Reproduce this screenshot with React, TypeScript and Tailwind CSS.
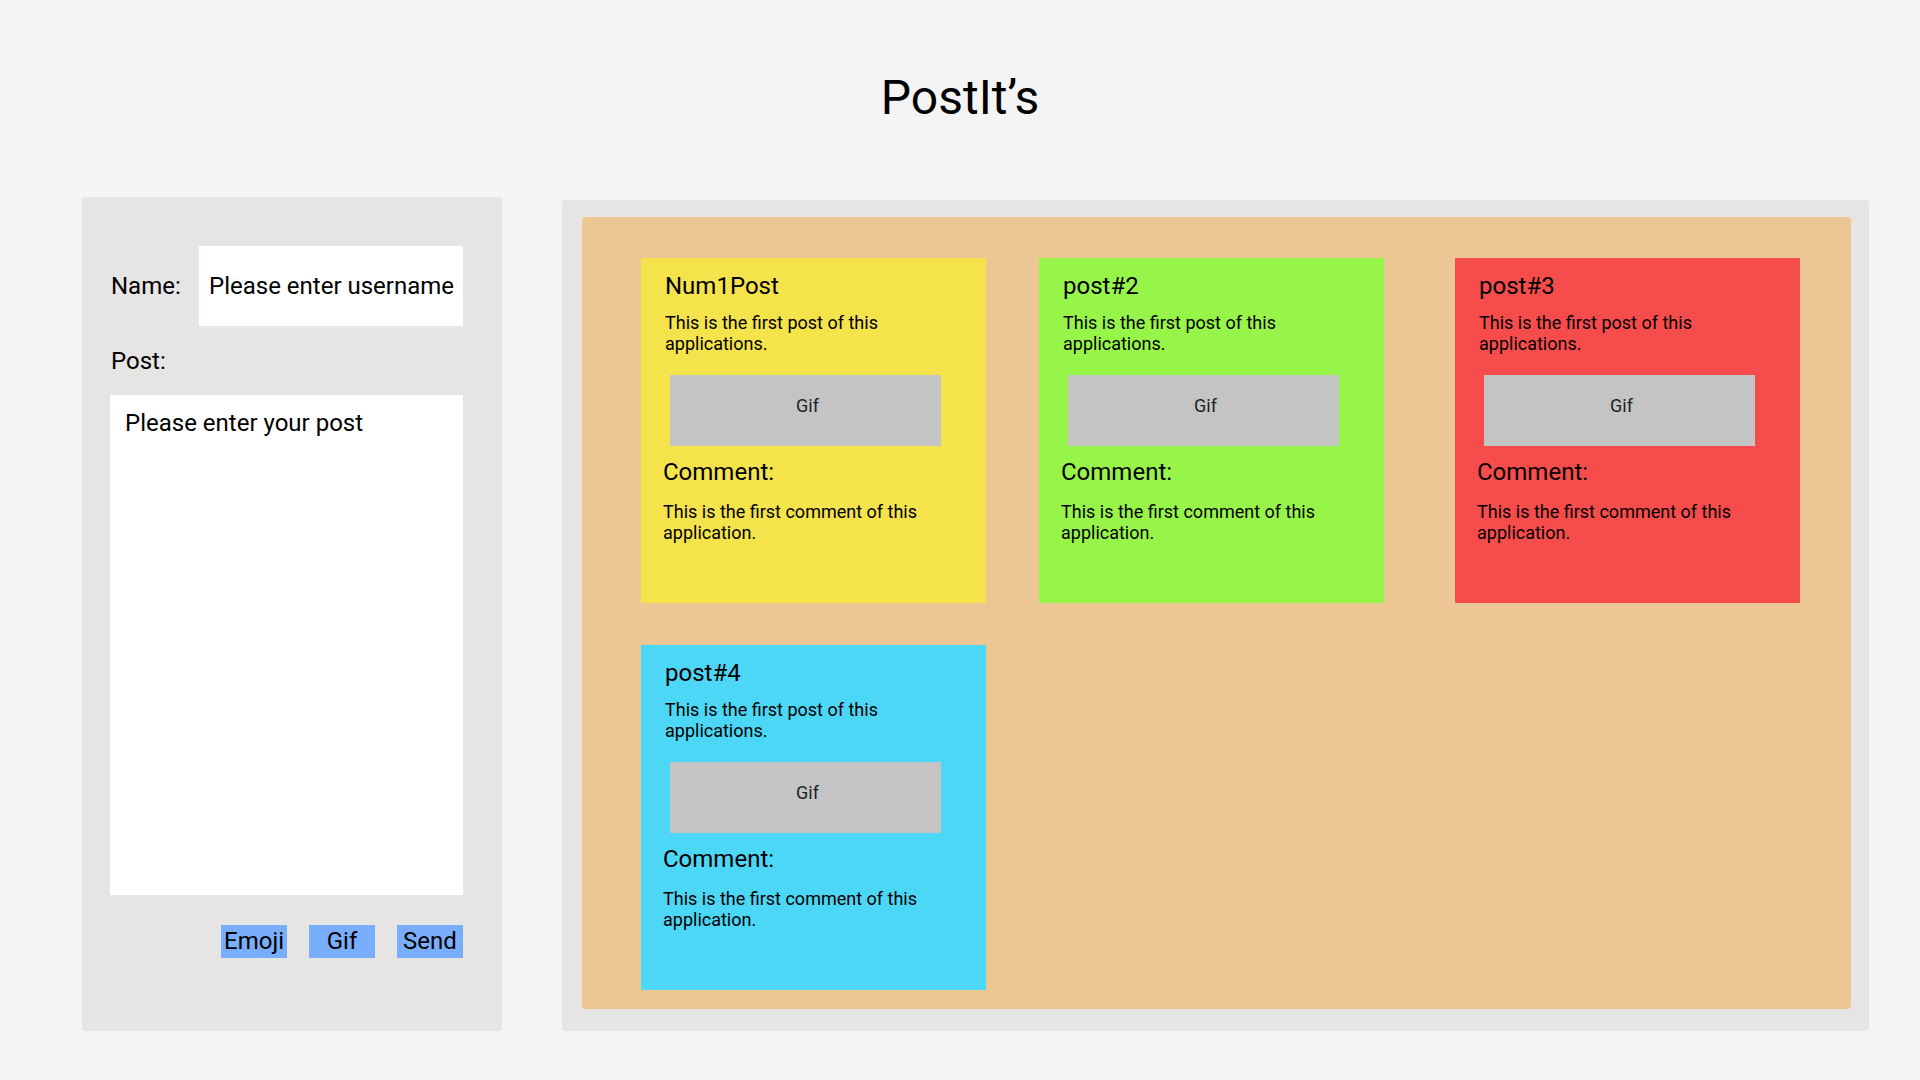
import React from "react";

type Post = { title: string; color: string };

const posts: Post[] = [
  { title: "Num1Post", color: "bg-[#f5e34c]" },
  { title: "post#2", color: "bg-[#97f54a]" },
  { title: "post#3", color: "bg-[#f74c4c]" },
  { title: "post#4", color: "bg-[#4bd7f5]" },
];

const PostCard = ({ post }: { post: Post }) => {
  return (
    <div className={`w-[345px] h-[345px] ${post.color}`}>
      <div className="pl-[24px] pt-[14px] text-[24px] leading-[28px]">{post.title}</div>
      <p className="pl-[24px] pr-[24px] mt-[12px] text-[18px] leading-[21px]">
        This is the first post of this applications.
      </p>
      <div className="ml-[29px] mt-[21px] w-[271px] h-[71px] bg-[#c4c4c4] flex justify-center pl-[4px] pt-[20px] text-[18px] leading-[21px] text-[#1e1e1e]">
        Gif
      </div>
      <div className="pl-[22px] mt-[12px] text-[24px] leading-[28px]">Comment:</div>
      <p className="pl-[22px] pr-[24px] mt-[15px] text-[18px] leading-[21px]">
        This is the first comment of this application.
      </p>
    </div>
  );
};

const App = () => {
  return (
    <div className="min-h-screen bg-[#f4f4f4] text-black font-['Roboto',sans-serif]">
      <h1 className="pt-[70px] text-center text-[48px] leading-[56px] font-normal">PostIt’s</h1>

      <div className="flex items-start mt-[71px] pl-[82px] gap-[60px]">
        {/* new post form */}
        <div className="w-[420px] h-[834px] bg-[#e6e5e3] rounded-[4px] pl-[28px] pt-[49px]">
          <div className="flex items-center">
            <label className="w-[89px] pl-[1px] text-[24px] leading-[28px]">Name:</label>
            <input
              className="w-[264px] h-[80px] bg-white pl-[10px] pr-0 text-[24px] outline-none placeholder:text-black"
              placeholder="Please enter username"
            />
          </div>
          <div className="mt-[21px] pl-[1px] text-[24px] leading-[28px]">Post:</div>
          <textarea
            className="mt-[20px] block w-[353px] h-[500px] bg-white resize-none px-[15px] pt-[14px] text-[24px] leading-[28px] outline-none placeholder:text-black"
            placeholder="Please enter your post"
          />
          <div className="w-[353px] mt-[30px] flex justify-end gap-[22px]">
            <button className="w-[66px] h-[33px] bg-[#78aefc] text-[24px] leading-[33px]">Emoji</button>
            <button className="w-[66px] h-[33px] bg-[#78aefc] text-[24px] leading-[33px]">Gif</button>
            <button className="w-[66px] h-[33px] bg-[#78aefc] text-[24px] leading-[33px]">Send</button>
          </div>
        </div>

        {/* board */}
        <div className="mt-[3px] w-[1307px] bg-[#e6e5e3] rounded-[4px] pl-[20px] pr-[18px] pt-[17px] pb-[22px]">
          <div className="h-[792px] bg-[#ecc794] rounded-[4px] pl-[59px] pt-[41px]">
            <div className="grid grid-cols-[398px_416px_345px] gap-y-[42px]">
              {posts.map((p, idx) => (
                <PostCard key={idx} post={p} />
              ))}
            </div>
          </div>
        </div>
      </div>
    </div>
  );
};

export default App;
